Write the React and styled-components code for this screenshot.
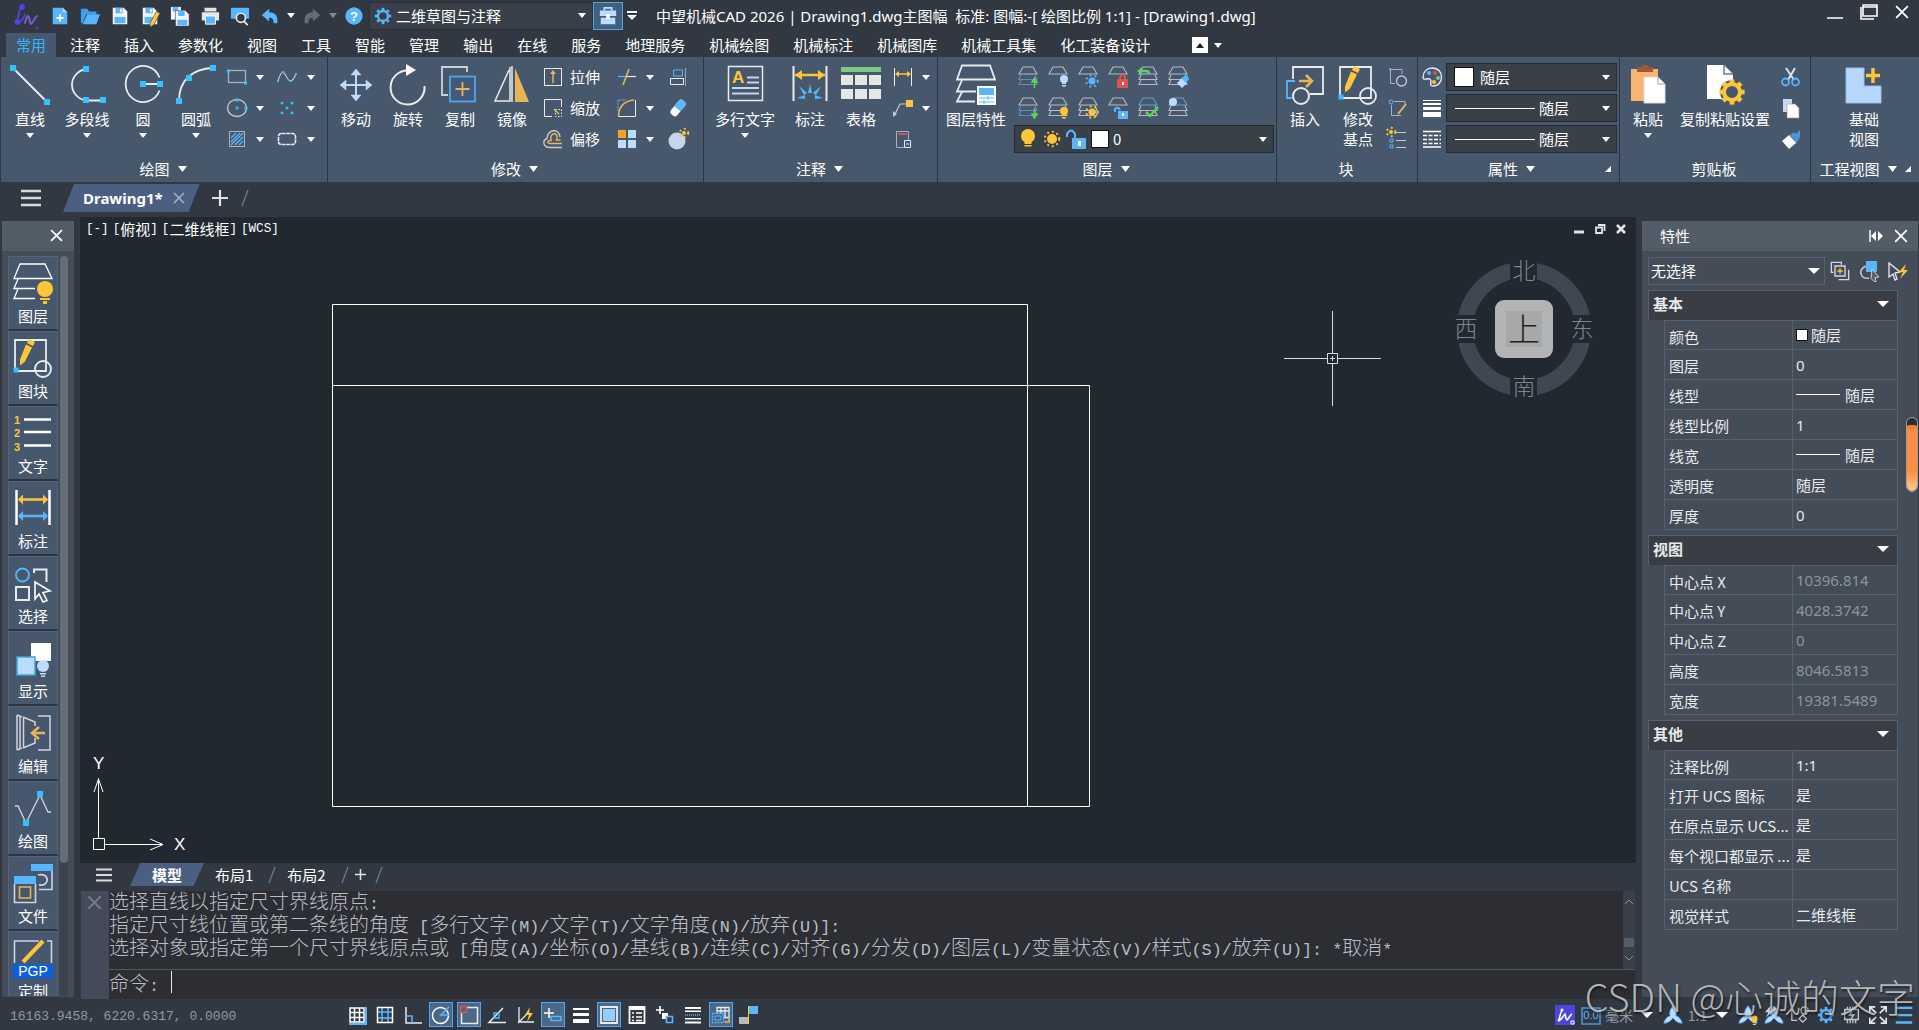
import { useState } from "react";
import styled, { createGlobalStyle } from "styled-components";

const W = "#e9ebee";
const B = "#58b6ff";
const C = "#35c0ff";
const Y = "#fdc53a";
const O = "#e9b553";
const L = "#bcdcff";

const Sq = ({ x, y, s = 6 }) => <rect x={x - s / 2} y={y - s / 2} width={s} height={s} fill={C} />;

const Stack = ({ color = "#b4bac3", low = color }) => (
    <g fill="none" stroke={color} strokeWidth="1.1">
        <path d="M6 1h10l4 7H2z" />
        <path d="M4 8.500l-2 5h18l-2-5M4 14l-2 4.500h18l-2-4.500" stroke={low} />
    </g>
);

const Trap = () => <path d="M6 1h10l4 7H2z" fill="none" stroke="#b4bac3" strokeWidth="1.1" />;

const Sun = ({ x, y, color = Y, r = 4 }) => (
    <g fill={color} stroke={color}>
        <circle cx={x} cy={y} r={r} stroke="none" />
        <circle cx={x} cy={y} r={r + 2.2} fill="none" strokeWidth="2" strokeDasharray="1.8 3" />
    </g>
);

const Bulb = ({ x, y, color = Y, r = 4 }) => (
    <g fill={color}>
        <circle cx={x} cy={y} r={r} />
        <path d={`M${x - r / 2} ${y + r - 1}h${r}v2h-${r}zM${x - r / 2} ${y + r + 2}h${r}v1.500h-${r}z`} />
    </g>
);

const Gear = ({ x, y, r, color, w = 2.5 }) => (
    <g fill="none" stroke={color}>
        <circle cx={x} cy={y} r={r} strokeWidth={w} />
        {[0, 45, 90, 135, 180, 225, 270, 315].map((a) => (
            <path key={a} d={`M${x} ${y - r - 1}v-${r * 0.45}`} strokeWidth={w * 1.2} transform={`rotate(${a} ${x} ${y})`} />
        ))}
    </g>
);

const EditBlock = () => (
    <>
        <path d="M2 34V3h31v31z" fill="none" stroke={W} strokeWidth="1.8" />
        <circle cx="30" cy="32" r="8" fill="none" stroke={W} strokeWidth="1.8" />
        <path d="M16 2l6 3-2 4-6-3zM13 7.500l6 3-7 14-5 4v-6z" fill={Y} />
        <Sq x={3} y={33} s={5} />
    </>
);

const Compass = () => <path d="M11 1c4 5 4 8 3 11 4 1 6 4 7 8-4 0-7-2-10-6-3 4-6 6-10 6 1-4 3-7 7-8-1-3-1-6 3-11z" fill={L} stroke={B} />;

const Floppy = () => (
    <>
        <path d="M3 2h12l4 4v14H3z" fill="#f3f4f6" />
        <path d="M6 2h8v6H6z" fill={B} />
        <path d="M11 3h2v4h-2z" fill="#f3f4f6" />
        <path d="M5 12h12v7H5z" fill={B} />
    </>
);

const art = {
    logo: <g fill="none" stroke="#5343e6" strokeWidth="1.800" strokeLinecap="round"><path d="M8 5C4 7 5 13 3 19" /><circle cx="8" cy="4" r="2" fill="#5343e6" /><circle cx="3.500" cy="19" r="2" fill="#5343e6" /><path d="M4 19c4 0 5-4 7-7" /><path d="M11 20c1-3 1-6 3-7 2 1 1 6 3 8 3-2 3-6 6-8" stroke="#7a58cf" strokeWidth="2" /><circle cx="23" cy="25" r=".5" /></g>,
    fileNew: <><path d="M3 2h11l5 5v13H3z" fill={B} /><path d="M14 2l5 5h-5z" fill="#a7d8ff" /><path d="M11 9v8M7 13h8" stroke="#fff" strokeWidth="2" /></>,
    open: <><path d="M1 3h7l2 3h8v3H7L3 19H1z" fill="#3c9ff0" /><path d="M8 9h14l-4 11H3z" fill={B} /></>,
    save: <Floppy />,
    saveAs: <><Floppy /><path d="M18 6l4 2-7 13-4 2 0-4z" fill={Y} stroke="#313842" strokeWidth=".6" /></>,
    saveAll: <><path d="M1 1h11v14H1z" fill="#f3f4f6" /><path d="M3 1h6v5H3z" fill={B} /><path d="M6 5h11l4 4v13H6z" fill="#f3f4f6" stroke="#313842" strokeWidth=".6" /><path d="M9 5h7v6H9zM8 15h11v6H8z" fill={B} /></>,
    print: <><path d="M5 2h13v4H5zM2 7h19v9H2z" fill="#e6e6e6" /><path d="M6 11h11v9H6z" fill={B} stroke="#fff" /></>,
    preview: <><path d="M1 2h20v12H1z" fill={B} /><circle cx="12" cy="13" r="5" fill="#313842" stroke={W} strokeWidth="1.800" /><path d="M15.500 17l4 4" stroke={W} strokeWidth="2" /></>,
    undo: <path d="M2 10l8-7v4c7 0 10 4 9 12h-4c0-4-1-6-5-6v4z" fill={B} />,
    redo: <path d="M20 10l-8-7v4C5 7 2 11 3 19h4c0-4 1-6 5-6v4z" fill="#686c73" />,
    help: <><circle cx="11" cy="11" r="9.500" fill={B} /><text x="11" y="16" textAnchor="middle" fontSize="15" fontWeight="bold" fill="#fff">?</text></>,
    gear: <Gear x={11} y={11} r={5.500} color={B} />,
    toolbox: <><path d="M7 5V2h8v3" fill="none" stroke={L} strokeWidth="2" /><path d="M2 5h18v6H2zM3 13h16v7H3z" fill={L} /><path d="M9 9h4v5H9z" fill="#fff" /></>,

    line: <><path d="M3 4l34 34" stroke={W} strokeWidth="2" /><Sq x={3} y={4} /><Sq x={37} y={38} /></>,
    pline: <><path d="M19 5A17 16 0 0 0 19 36.500H36" fill="none" stroke={W} strokeWidth="1.800" /><Sq x={19} y={5} /><Sq x={19} y={36} /><Sq x={36} y={36} /></>,
    circle: <><path d="M36.500 13.500a17.500 18 0 1 0 0 13M20 20h17" fill="none" stroke={W} strokeWidth="1.800" /><Sq x={20} y={20} /><Sq x={37} y={20} /></>,
    arc: <><path d="M3 37C3 16 16 5 37 4" fill="none" stroke={W} strokeWidth="1.800" /><Sq x={3} y={37} /><Sq x={13} y={14} /><Sq x={37} y={4} /></>,
    rect: <><rect x="2.500" y="4.500" width="17" height="12" fill="none" stroke="#aab2bd" strokeWidth="1.300" /><Sq x={2.5} y={5} s={3} /><Sq x={19.5} y={17} s={3} /></>,
    spline: <><path d="M2 15C4 8 6 5 8 7c3 3 4 9 7 8 2-1 4-4 5-8" fill="none" stroke="#c3c8cf" strokeWidth="1.100" /><Sq x={2} y={15} s={2} /><Sq x={7} y={6} s={2} /><Sq x={15} y={15} s={2} /><Sq x={20} y={8} s={2} /></>,
    ellipse: <><ellipse cx="11" cy="11" rx="9.500" ry="8.500" fill="none" stroke="#c3c8cf" strokeWidth="1.300" /><path d="M11 9v4M9 11h4" stroke={C} /><Sq x={11} y={3} s={3} /><Sq x={20} y={11} s={3} /></>,
    points: <><Sq x={6} y={6} s={2.500} /><Sq x={16} y={6} s={2.500} /><Sq x={11} y={11} s={2.500} /><Sq x={6} y={16} s={2.500} /><Sq x={16} y={16} s={2.500} /></>,
    hatch: <><rect x="3.500" y="3.500" width="15" height="15" fill="none" stroke="#aab2bd" /><path d="M5 10l5-5M5 14l9-9M5 17L17 5M9 17l8-8M13 17l4-4" stroke={B} strokeWidth="1.300" /></>,
    cloud: <rect x="2.500" y="5.500" width="17" height="11" rx="3" fill="none" stroke={W} strokeWidth="1.600" strokeDasharray="4 .6" />,

    move: <g fill={L} stroke={L}><path d="M20 9v24M8 21h24" strokeWidth="2" /><path d="M20 5l5 6H15zM20 37l5-6H15zM4 21l6-5v10zM36 21l-6-5v10z" strokeWidth=".5" /></g>,
    rotate: <><path d="M20 6.500A17 17 0 1 0 36.500 22" fill="none" stroke={W} strokeWidth="2" /><path d="M18 0l10 6-10 6z" fill="#fff" /></>,
    copy: <><path d="M27 8V3H2v28h6" fill="none" stroke="#cdd2d8" strokeWidth="1.800" /><rect x="10" y="12.500" width="25" height="25" fill="#43597a" stroke="#4ea6ea" strokeWidth="1.800" /><path d="M22.500 18v14M15.500 25h14" stroke={O} strokeWidth="1.800" /></>,
    mirror: <><path d="M18 3v34H3L17 6" fill="none" stroke={W} strokeWidth="1.500" /><path d="M20 2v36" stroke={W} strokeWidth="1.500" /><path d="M23 4l14 34H23z" fill={O} /></>,
    stretch: <><rect x="2.500" y="2.500" width="17" height="17" fill="none" stroke={W} /><path d="M11 17V7" stroke={O} strokeWidth="1.500" /><path d="M11 4l3 4H8z" fill={O} /></>,
    scale: <><path d="M10 19.500H2.500v-17h17V10" fill="none" stroke={W} /><path d="M13.500 12.500h6v7h-6z" fill="none" stroke={W} strokeDasharray="1.500 1.500" /><path d="M12 12l5 5" stroke={O} strokeWidth="1.500" /></>,
    offset: <><path d="M20 19.500H8c-7 0-8-7-3-9C6 1 17 0 18 9" fill="none" stroke="#c3c8cf" strokeWidth="1.400" /><path d="M20 15.500H8c-3 0-3-3 1-3C7 3 18 4 14.500 12h4" fill="none" stroke={O} strokeWidth="1.500" /></>,
    trim: <><path d="M2 10.500h8" stroke={B} strokeWidth="1.200" /><path d="M10 10.500h10" stroke={W} strokeWidth="1.200" /><path d="M7 19l6-16" stroke={O} strokeWidth="1.500" /></>,
    fillet: <><path d="M19.500 3v16.500H2.500v-3" fill="none" stroke={W} /><path d="M2 14V3h8" fill="none" stroke={B} strokeDasharray="2 1" /><path d="M2.500 19C3 9 8 4 18 3" fill="none" stroke={O} strokeWidth="1.600" /></>,
    array: <><path d="M2 2h8v8H2z" fill="#faa51b" /><path d="M12 2h8v8h-8zM2 12h8v8H2zM12 12h8v8h-8z" fill={L} /></>,
    align: <><path d="M6.500 4h9v6h-9z" fill="none" stroke={B} /><path d="M3.500 12.500h13v6h-13z" fill="none" stroke={W} /><path d="M18.500 2v18" stroke="#9aa5b4" /></>,
    eraser: <g transform="rotate(-50 11 11)"><rect x="2" y="7" width="18" height="8" rx="3" fill="#fff" /><path d="M10 7h7q3 0 3 4t-3 4h-7z" fill={B} /></g>,
    explode: <><circle cx="10" cy="13" r="8.500" fill="#c8d5e6" /><Sun x={17} y={5} r={2} /></>,

    mtext: <><rect x="3.500" y="2.500" width="34" height="34" fill="none" stroke={W} strokeWidth="1.500" /><text x="7" y="19" fontSize="17" fontWeight="bold" fill={Y}>A</text><path d="M22 13.500h12M22 18.500h12M7 24h27M7 29.500h27" stroke="#c6d6ee" strokeWidth="2" /></>,
    dim: <><path d="M3.500 2v35M36.500 2v35" stroke={W} strokeWidth="2" /><path d="M5 11h30" stroke={Y} strokeWidth="2.500" /><path d="M5 11l7-5v10zM35 11l-7-5v10z" fill={Y} /><path d="M20 20l2 9h-4zM9 22l8 7-3 2zM31 22l-8 7 3 2zM7 34l8-3v4zM33 34l-8-3v4z" fill={B} /></>,
    table: <><path d="M0 3h40v5H0z" fill="#7cc884" /><path d="M0 11h12v10H0zM14 11h12v10H14zM28 11h12v10H28zM0 25h12v10H0zM14 25h12v10H14zM28 25h12v10H28z" fill="#e6e6e6" /></>,
    dimSmall: <><path d="M2.500 2v18M19.500 2v18" stroke={W} /><path d="M4 8h14" stroke={Y} strokeWidth="1.500" /><path d="M3 8l4-3v6zM19 8l-4-3v6z" fill={Y} /></>,
    leader: <><path d="M2 19L8 7h7" fill="none" stroke="#c3c8cf" strokeWidth="1.200" /><path d="M1 20v-6l4 3z" fill="#c3c8cf" /><path d="M14 3h7v7h-7z" fill={Y} /></>,
    field: <><path d="M4.500 3.500h12v16h-12z" fill="none" stroke="#aab2bd" /><path d="M6 6h9" stroke="#d25353" strokeWidth="2" /><path d="M12.500 12.500h6v7h-6z" fill="#45576e" stroke={W} /><path d="M14 16h3" stroke={B} strokeWidth="2" /></>,

    layers: <><path d="M6 1.500h28l5 14H1zM6 16L1 27.500h19M6 28L1 37.500h18" fill="none" stroke={W} strokeWidth="1.800" /><path d="M21 22h19v19H21z" fill="#fff" /><path d="M23 24h15v7H23z" fill={B} /><path d="M23 34h15M23 38h15M32 32v4M28 36v4" stroke={B} /></>,
    lyUp: <><Stack low="#5d8fbd" /><path d="M17.500 22v-7M15 16l2.500-4 2.500 4z" stroke="#5ed35e" strokeWidth="1.500" fill="#5ed35e" /></>,
    lyOff: <><Trap /><Bulb x={17} y={13} color={L} /></>,
    lyFreeze: <><Trap /><Sun x={15} y={15} color={B} r={3.500} /></>,
    lyLock: <><Trap /><path d="M13 14v-3q3-4 5 0v3" fill="none" stroke="#e05050" strokeWidth="2" /><path d="M10 13h11v9H10z" fill="#e05050" /><path d="M15 16h2v3h-2z" fill="#fff" /></>,
    lyPrev: <><Stack /><path d="M2 5h7q3 0 3 3" fill="none" stroke="#5ed35e" strokeWidth="2.500" /><path d="M0 5l5-4v8z" fill="#5ed35e" /></>,
    lyMatch: <><Stack /><path d="M10 17l5-5 5 5-5 5z" fill={L} /><path d="M14 12l6-3 2 4-3 4z" fill={B} /></>,
    lyDown: <><Stack low="#5d8fbd" /><path d="M17.500 11v7M15 17l2.500 4 2.500-4z" stroke="#5ed35e" strokeWidth="1.500" fill="#5ed35e" /></>,
    lyOn: <><Stack /><Bulb x={17} y={14} /></>,
    lyThaw: <><Stack /><Sun x={15} y={15} r={3.500} /></>,
    lyUnlock: <><Trap /><path d="M8 15v-3q3-3 5 1" fill="none" stroke={B} strokeWidth="2" /><path d="M11 14h10v8H11z" fill={B} /><path d="M15 16h2v3h-2z" fill="#fff" /></>,
    lyCheck: <><Stack color="#5d9fd6" low="#b4bac3" /><path d="M9 15l4 4 8-9" fill="none" stroke="#5ed35e" strokeWidth="2.500" /></>,
    lyWalk: <><Stack color="#5d9fd6" low="#b4bac3" /><circle cx="6" cy="5" r="4" fill={L} /></>,
    bulb: <Bulb x={11} y={8} r={7} />,
    sun: <Sun x={11} y={11} r={5} />,
    unlock: <><path d="M2 9V6q4-7 8 0v5" fill="none" stroke={B} strokeWidth="2" /><path d="M7 10h14v11H7z" fill={B} /><path d="M13 13h3v5h-3z" fill="#fff" /></>,

    insert: <><path d="M8 15V3h30v27H25" fill="none" stroke={W} strokeWidth="1.800" /><path d="M10 17H2v17h5" fill="none" stroke={B} strokeWidth="1.800" /><circle cx="16" cy="32" r="8" fill="#45576e" stroke={W} strokeWidth="2" /><path d="M14 17h12M21 11l6 6-6 6" fill="none" stroke={O} strokeWidth="2.500" /></>,
    editBlock: <EditBlock />,
    blkMake: <><path d="M15 8V3.500H3.500v14H8" fill="none" stroke="#aab2bd" /><circle cx="14.500" cy="15" r="5" fill="none" stroke="#c3c8cf" strokeWidth="1.300" /><Sq x={3} y={3} s={2} /></>,
    blkEdit: <><path d="M7 4.500h11V9M14 18.500H4.500V8" fill="none" stroke="#aab2bd" /><circle cx="4" cy="5" r="2" fill="none" stroke={B} /><path d="M11 17l8-10" stroke={O} strokeWidth="2" /></>,
    attr: <><Sun x={4} y={4} r={2} /><path d="M3 11h3v3H3zM3 17h3v3H3z" fill="none" stroke={B} /><path d="M9 4.500h10M9 12.500h10M9 19.500h10" stroke="#c3c8cf" strokeWidth="1.200" /></>,

    palette: <><path d="M11 2c13 0 12 18 1 18-5 0 0-5-3-7-3-1-7 2-7-2C2 6 6 2 11 2z" fill="none" stroke={W} strokeWidth="1.400" /><circle cx="8" cy="7" r="2" fill={B} /><circle cx="14" cy="7" r="2" fill="#e05050" /><circle cx="17" cy="12" r="2" fill="#7cc884" /><circle cx="13" cy="16" r="2" fill={Y} /></>,
    weights: <path d="M2 3h18v1H2zM2 6h18v2H2zM2 10h18v3H2zM2 15h18v5H2z" fill="#fff" />,
    ltypes: <><path d="M2 3.500h18M2 19h18" stroke="#fff" strokeWidth="1.300" /><path d="M2 7.500h18M2 11.500h18M2 15.500h18" stroke="#fff" strokeDasharray="4 1.500" strokeWidth="1.500" /></>,

    paste: <><path d="M3 5h27v32H3z" fill="#f9b470" /><path d="M9 3h5V1h6v2h5v5H9z" fill="#9c5a37" /><path d="M16 13h14l7 7v19H16z" fill="#fff" stroke="#d7dce4" /><path d="M30 13v7h7" fill="none" stroke="#9aa5b4" /></>,
    pasteSet: <><path d="M2 1h17l9 9v15l-9 10H2z" fill="#fff" /><path d="M19 1v9h9" fill="none" stroke="#6d7c92" strokeWidth="1.500" /><circle cx="27" cy="28" r="12" fill="#47576c" /><Gear x={27} y={28} r={8} color={Y} w={4} /></>,
    cut: <><path d="M6 2l8 12M15 2L8 14" stroke="#d6e4f5" strokeWidth="2" /><circle cx="5.500" cy="16" r="3.500" fill="none" stroke={B} strokeWidth="1.800" /><circle cx="15.500" cy="16" r="3.500" fill="none" stroke={B} strokeWidth="1.800" /></>,
    pages: <><path d="M3 2h9v13H3z" fill="#cbd7ee" /><path d="M7 7h8l4 4v10H7z" fill="#fff" stroke="#8e9bb0" strokeWidth=".6" /></>,
    brush: <><path d="M10 7l4-3 2 2 4-4 0 7-4 7z" fill="#4e93dc" /><path d="M2 13l7-6 7 8-7 6z" fill="#fff" /></>,
    baseView: <><path d="M2 4h18v18h17v17H2z" fill="#b8d8fb" stroke="#96bfe9" /><path d="M29 4v15M22 11.500h14" stroke={Y} strokeWidth="3.500" /></>,

    pLayers: <><path d="M7 2h25l7 14.500H1zM5 17L1 26.500h21M5 27l-4 9.500h21" fill="none" stroke="#fff" strokeWidth="1.300" /><circle cx="32" cy="27" r="8" fill={Y} /><path d="M27 36h10v2H27zM30 39h4v3h-4z" fill={Y} /></>,
    pText: <><g fill={Y} fontSize="11" fontWeight="bold"><text x="1" y="12">1</text><text x="1" y="25">2</text><text x="1" y="39">3</text></g><path d="M11 7.500h27M11 20h27M11 33.500h27" stroke="#fff" strokeWidth="2.500" /></>,
    pDim: <><path d="M3.500 3v35M36.500 3v35" stroke="#fff" strokeWidth="2.500" /><path d="M6 12.500h28" stroke={Y} strokeWidth="2.500" /><path d="M5 12.500l5-5v10zM35 12.500l-5-5v10z" fill={Y} /><path d="M6 29h28" stroke={B} strokeWidth="2.500" /><path d="M5 29l5-5v10zM35 29l-5-5v10z" fill={B} /></>,
    pSelect: <><circle cx="9.500" cy="13" r="6.500" fill="none" stroke={B} strokeWidth="1.800" /><path d="M21 11V7.500h12.500V20M3 25h13v13H3z" fill="none" stroke={W} strokeWidth="2" /><path d="M22 20l15 9-7 1.500 4 8-4 1.500-4-8-4 5z" fill="none" stroke="#fff" strokeWidth="1.600" /></>,
    pShow: <><path d="M18 6h20v18H18z" fill="#fff" /><path d="M4 20h18v18H4z" fill={L} stroke="#3ca5dc" strokeWidth="1.500" /><circle cx="30" cy="29" r="6" fill={L} /><path d="M27 36h6v1.500h-6zM28 38.500h4v1.500h-4z" fill={L} /></>,
    pEdit: <><path d="M4 3v35M7 4v33M10.500 5v31M4 3l5 2M4 38l5-2M10 5l12 5v4M10 36l12-5v-5M25 4h12v34H25" fill="none" stroke="#cfd4da" strokeWidth="1.500" /><path d="M32 21H20M26 15l-7 6 7 6" fill="none" stroke={O} strokeWidth="2.500" /></>,
    pDraw: <><path d="M2 19h3l8 17L27 8l8 17h3" fill="none" stroke="#cfd4da" strokeWidth="1.300" /><Sq x={13} y={36} /><Sq x={27} y={7} /></>,
    pFile: <><path d="M18 2h22v7H18zM1 14h22v8H1z" fill={B} /><path d="M26 27.500h13V9M1.500 22v18.500h21V22" fill="none" stroke="#cfd4da" strokeWidth="1.600" /><path d="M6.500 25h11v11h-11z" fill="none" stroke={O} strokeWidth="1.600" /><path d="M25 13c12-3 12 12 1 10" fill="none" stroke="#c6d6ee" strokeWidth="1.800" /></>,
    pPgp: <><path d="M1.500 26V4H26M34 4h4.500v22" fill="none" stroke="#cfd4da" strokeWidth="1.600" /><path d="M10 25l20-21" stroke={Y} strokeWidth="4" /><path d="M0 27h40v14H0z" fill="#0b60df" /><text x="20" y="39" textAnchor="middle" fontSize="14" fill="#fff">PGP</text></>,

    pickAdd: <><path d="M4 12.500H1.500v-11h11V4M20.500 9.500v11h-11" fill="none" stroke="#d3d7dc" strokeWidth="1.500" /><path d="M5.500 5.500h11v11h-11z" fill="none" stroke="#d3d7dc" strokeWidth="1.500" /><path d="M11 8v6M8 11h6" stroke={Y} strokeWidth="1.500" /></>,
    quickPick: <><path d="M8 6c-9 4-5 14 3 12" fill="none" stroke="#c3c8cf" strokeWidth="1.600" /><path d="M8 1h11v11H8z" fill={B} /><path d="M14 9l7 8-4 .500 1 4-2 0-3-3z" fill="#5a6470" stroke={W} strokeWidth=".8" /></>,
    flashPick: <><path d="M2 3l11 9-5 1 2 6-2 1-2-6-4 3z" fill="none" stroke={W} strokeWidth="1.300" /><path d="M19 4l-7 8h4l-3 7 8-9h-4z" fill={Y} /></>,

    sGridBlue: <><path d="M3 3h14v14H3zM7.500 3v14M12.500 3v14M3 7.500h14M3 12.500h14" fill="none" stroke="#fff" strokeWidth="1.500" /><path d="M2 19h17V2" fill="none" stroke={B} strokeWidth="2" /></>,
    sGrid: <><path d="M2 7h16M2 13h16M7 2v16M13 2v16" stroke={B} strokeWidth="1.500" /><path d="M2.500 2.500h15v15h-15z" fill="none" stroke="#fff" strokeWidth="1.500" /></>,
    sOrtho: <><path d="M3 2v16h16" fill="none" stroke={W} strokeWidth="1.500" /><path d="M3 11h6v7" fill="none" stroke={B} strokeWidth="1.500" /></>,
    sPolar: <><circle cx="9.500" cy="10.500" r="8" fill="none" stroke="#fff" strokeWidth="1.500" /><path d="M18 2l-8 8h8" fill="none" stroke={B} strokeWidth="1.600" /></>,
    sSnap: <><path d="M8 2.500h10.500v16h-16V8" fill="none" stroke={W} strokeWidth="1.500" /><path d="M1.500 1.500h6v6h-6z" fill="none" stroke="#e05050" strokeWidth="1.500" /></>,
    sTrack: <><path d="M19 17.500H2L16 3" fill="none" stroke={W} strokeWidth="1.500" /><path d="M7 8h5v5H7z" fill="none" stroke={B} strokeWidth="1.300" /></>,
    sDucs: <><path d="M4 2v15h15M3 18L14 7" fill="none" stroke={W} strokeWidth="1.300" /><path d="M15 2l-5 8h4l-2 7 6-9h-4z" fill={Y} /></>,
    sDyn: <><path d="M6 3v10M1 8h10" stroke="#fff" strokeWidth="1.500" /><path d="M8 11.500h10v4H8z" fill="none" stroke={B} strokeWidth="1.500" /></>,
    sLwt: <path d="M2 3h16v2H2zM2 8h16v3H2zM2 14h16v4H2z" fill="#fff" />,
    sTrans: <><path d="M2 2h16v16H2z" fill="none" stroke={W} strokeWidth="1.800" /><path d="M4 4h12v12H4z" fill="#96cdfa" /></>,
    sQuick: <><path d="M2.500 2h15v16h-15z" fill="none" stroke="#fff" strokeWidth="1.800" /><path d="M2 2h16v3H2z" fill="#fff" /><path d="M5 8h2M5 12h2M5 15.500h2M9 8h6M9 12h6M9 15.500h6" stroke="#fff" strokeWidth="1.600" /></>,
    sCycle: <><path d="M5 1v8M1 5h8" stroke="#fff" strokeWidth="1.600" /><path d="M7 8h6v6H7z" fill="#fff" /><path d="M11.500 11.500h6v6h-6z" fill="#313842" stroke={B} strokeWidth="1.600" /></>,
    sRows: <><path d="M2 2h16v2H2zM2 5.500h16V7H2zM2 13h16v1.500H2zM2 16.500h16v2H2z" fill="#fff" /><path d="M2 10h16" stroke={B} strokeDasharray="1 1" strokeWidth="1.500" /></>,
    sView: <><path d="M6 2.500h12v10H6zM10 2v10M14 2v10M6 6h12" fill="none" stroke={W} strokeWidth="1.300" /><path d="M1.500 8.500h11v9h-11z" fill="#446184" stroke={B} strokeDasharray="2 1" strokeWidth="1.500" /><path d="M4 11h6v4H4z" fill="none" stroke={B} /><path d="M18 12v5h-4" fill="none" stroke={O} strokeWidth="1.600" /></>,
    sIso: <><path d="M10 1h9v8h-9z" fill={B} /><path d="M0 12h9v7H0z" fill="#b9b9b9" /><path d="M9.500 1v18" stroke={Y} /></>,
    brand: <><rect width="20" height="20" fill="#4e46dc" /><path d="M7 5c-2 4-2 6-3 10 3 0 4-4 6-6 1 2 0 5 2 6 2-2 3-5 5-6" fill="none" stroke="#fff" strokeWidth="1.600" /><circle cx="7" cy="5" r="1.500" fill="#fff" /><circle cx="4" cy="15" r="1.500" fill="#fff" /><path d="M16 16h3v3h-3z" fill="none" stroke="#fff" /></>,
    units: <><path d="M1 3h18v16H1z" fill="none" stroke="#4a97d8" strokeWidth="1.500" /><text x="10" y="14" textAnchor="middle" fontSize="11" fill={B}>0.0</text></>,
    compass: <Compass />,
    compassBulb: <><Compass /><Bulb x={18} y={15} r={3.500} /></>,
    compassFlash: <><Compass /><path d="M8 0L1 8h4l-3 6 8-8H6z" fill="#d6d6d6" /></>,
    shapes: <><path d="M2 5v12h6" fill="none" stroke="#c3c8cf" strokeWidth="1.300" /><circle cx="16" cy="6" r="4" fill="none" stroke="#c3c8cf" strokeWidth="1.300" /><path d="M14 11l4 4-4 4-4-4z" fill="none" stroke="#c3c8cf" strokeWidth="1.300" /></>,
    chip: <path d="M3 5h15v11H3zM6 2v3M9 2v3M12 2v3M15 2v3M6 16v4M9 16v4M12 16v4M15 16v4M11 7l-3 4h5l-3 4" fill="none" stroke="#c3c8cf" strokeWidth="1.500" />,
    expand: <path d="M2 8V2h6M14 2h6v6M20 14v6h-6M8 20H2v-6M2 2l7 7M20 2l-7 7M20 20l-7-7M2 20l7-7" fill="none" stroke="#e4e6ea" strokeWidth="1.800" />,
    bars: <path d="M2 2h18v2.500H2zM2 10h18v2.500H2zM2 18h18v2.500H2z" fill={B} />,
};

const Icon = ({ name, size = 22, box = size }) => (
    <Svg width={size} height={size} viewBox={`0 0 ${box} ${box}`} aria-hidden="true">{art[name]}</Svg>
);

const Caret = ({ wide }) => (
    <Svg width={wide ? 12 : 8} height={wide ? 6 : 5} viewBox="0 0 8 5" preserveAspectRatio="none" aria-hidden="true">
        <path d="M0 0h8L4 5z" fill="#fff" />
    </Svg>
);

const Cross = ({ size = 12, color = "#fff" }) => (
    <Svg width={size} height={size} viewBox="0 0 12 12" aria-hidden="true">
        <path d="M1 1l10 10M11 1L1 11" stroke={color} strokeWidth="1.600" />
    </Svg>
);

const Lines = ({ size = 20 }) => (
    <Svg width={size} height={size} viewBox="0 0 20 20" aria-hidden="true">
        <path d="M0 3h20M0 10h20M0 17h20" stroke="#d9d9d9" strokeWidth="2.500" />
    </Svg>
);

const Slash = () => (
    <SlashMark width="8" height="20" viewBox="0 0 8 20" aria-hidden="true">
        <path d="M1 18L7 2" stroke="#6f7884" strokeWidth="1.300" />
    </SlashMark>
);

const Plus = ({ size = 16 }) => (
    <Svg width={size} height={size} viewBox="0 0 16 16" aria-hidden="true">
        <path d="M8 0v16M0 8h16" stroke="#e1e1e1" strokeWidth="2.200" />
    </Svg>
);

// Latin runs in the console are half as wide as the Chinese ones
const Mono = ({ children }) =>
    children.split(/([\x20-\x7e]+)/).map((part, i) => (i % 2 ? <Half key={i}>{part}</Half> : part));

const BigTool = ({ icon, label, width, drop }) => (
    <Big $width={width}>
        <Icon name={icon} size={40} />
        <BigLabel>{label}</BigLabel>
        {drop && <Caret />}
    </Big>
);

const Small = ({ icon, label }) => (
    <Tool aria-label={label}><Icon name={icon} /></Tool>
);

const Drop = ({ label }) => <Tool aria-label={label}><Caret /></Tool>;

const Group = ({ title, width, more, launcher, children }) => (
    <Panel $width={width}>
        <PanelBody>{children}</PanelBody>
        <PanelTitle>
            <TitleButton $launcher={launcher}>{title}{more && <Caret wide />}</TitleButton>
            {launcher && <Svg width="6" height="6" viewBox="0 0 6 6"><path d="M6 0v6H0z" fill="#fff" /></Svg>}
        </PanelTitle>
    </Panel>
);

const tabs = ["常用", "注释", "插入", "参数化", "视图", "工具", "智能", "管理", "输出", "在线", "服务", "地理服务", "机械绘图", "机械标注", "机械图库", "机械工具集", "化工装备设计"];

const quick = [
    ["fileNew", "新建"], ["open", "打开"], ["save", "保存"], ["saveAs", "另存为"],
    ["saveAll", "全部保存"], ["print", "打印"], ["preview", "打印预览"],
];

const paletteItems = [
    ["pLayers", "图层"], ["editBlock", "图块"], ["pText", "文字"], ["pDim", "标注"], ["pSelect", "选择"],
    ["pShow", "显示"], ["pEdit", "编辑"], ["pDraw", "绘图"], ["pFile", "文件"], ["pPgp", "定制"],
];

const layerTools = [
    ["lyUp", "上移图层"], ["lyOff", "关闭图层"], ["lyFreeze", "冻结图层"], ["lyLock", "锁定图层"], ["lyPrev", "上一个图层"], ["lyMatch", "图层匹配"],
    ["lyDown", "下移图层"], ["lyOn", "打开图层"], ["lyThaw", "解冻图层"], ["lyUnlock", "解锁图层"], ["lyCheck", "置为当前"], ["lyWalk", "图层漫游"],
];

const properties = [
    ["基本", [["颜色", "随层", "swatch"], ["图层", "0"], ["线型", "随层", "line"], ["线型比例", "1"], ["线宽", "随层", "line"], ["透明度", "随层"], ["厚度", "0"]]],
    ["视图", [["中心点 X", "10396.814", "dim"], ["中心点 Y", "4028.3742", "dim"], ["中心点 Z", "0", "dim"], ["高度", "8046.5813", "dim"], ["宽度", "19381.5489", "dim"]]],
    ["其他", [["注释比例", "1:1"], ["打开 UCS 图标", "是"], ["在原点显示 UCS...", "是"], ["每个视口都显示 ...", "是"], ["UCS 名称", ""], ["视觉样式", "二维线框"]]],
];

const statusTools = [
    ["sGridBlue", "捕捉"], ["sGrid", "栅格"], ["sOrtho", "正交"], ["sPolar", "极轴", true], ["sSnap", "对象捕捉", true],
    ["sTrack", "对象追踪"], ["sDucs", "动态 UCS"], ["sDyn", "动态输入", true], ["sLwt", "线宽"], ["sTrans", "透明度", true],
    ["sQuick", "快捷特性"], ["sCycle", "选择循环"], ["sRows", "注释监视"], ["sView", "视口", true], ["sIso", "隔离对象"],
];

const log = [
    "选择直线以指定尺寸界线原点:",
    "指定尺寸线位置或第二条线的角度 [多行文字(M)/文字(T)/文字角度(N)/放弃(U)]:",
    "选择对象或指定第一个尺寸界线原点或 [角度(A)/坐标(O)/基线(B)/连续(C)/对齐(G)/分发(D)/图层(L)/变量状态(V)/样式(S)/放弃(U)]: *取消*",
];

const TitleBar = () => (
    <TopBar>
        <Logo><Icon name="logo" size={26} box={26} /></Logo>
        {quick.map(([icon, label]) => <QuickButton key={icon} aria-label={label}><Icon name={icon} size={20} box={22} /></QuickButton>)}
        <QuickButton aria-label="撤销"><Icon name="undo" size={20} box={22} /></QuickButton>
        <DropButton aria-label="撤销列表"><Caret /></DropButton>
        <QuickButton aria-label="重做"><Icon name="redo" size={20} box={22} /></QuickButton>
        <DropButton aria-label="重做列表" $faded><Caret /></DropButton>
        <QuickButton aria-label="帮助"><Icon name="help" size={20} box={22} /></QuickButton>
        <SpaceBox>
            <Icon name="gear" size={20} box={22} />
            <Select aria-label="工作空间"><option>二维草图与注释</option></Select>
            <Caret />
        </SpaceBox>
        <ToolboxButton aria-label="工具箱"><Icon name="toolbox" size={20} box={22} /></ToolboxButton>
        <DropButton aria-label="自定义"><Svg width="10" height="10" viewBox="0 0 10 10"><path d="M0 0h10v2H0zM0 4h10L5 9z" fill="#fff" /></Svg></DropButton>
        <WindowTitle>中望机械CAD 2026 | Drawing1.dwg主图幅&nbsp; 标准: 图幅:-[ 绘图比例 1:1] - [Drawing1.dwg]</WindowTitle>
        <WindowButtons>
            <Plain aria-label="最小化"><Svg width="16" height="16" viewBox="0 0 16 16"><path d="M0 14h16" stroke="#fff" strokeWidth="1.500" /></Svg></Plain>
            <Plain aria-label="还原"><Svg width="18" height="16" viewBox="0 0 18 16"><path d="M3 1h14v11H3zM3 3h14M1 3v12h13" fill="none" stroke="#fff" strokeWidth="1.600" /></Svg></Plain>
            <Plain aria-label="关闭"><Cross size={14} /></Plain>
        </WindowButtons>
    </TopBar>
);

const Ribbon = () => (
    <RibbonBar>
        <Group title="绘图" width={327} more>
            <BigTool icon="line" label="直线" width={58} drop />
            <BigTool icon="pline" label="多段线" width={56} drop />
            <BigTool icon="circle" label="圆" width={56} drop />
            <BigTool icon="arc" label="圆弧" width={50} drop />
            <Grid $cols="32px 14px 40px 8px">
                <Small icon="rect" label="矩形" /><Drop label="矩形列表" /><Small icon="spline" label="样条曲线" /><Drop label="样条曲线列表" />
                <Small icon="ellipse" label="椭圆" /><Drop label="椭圆列表" /><Small icon="points" label="点" /><Drop label="点列表" />
                <Small icon="hatch" label="填充" /><Drop label="填充列表" /><Small icon="cloud" label="修订云线" /><Drop label="云线列表" />
            </Grid>
        </Group>
        <Group title="修改" width={376} more>
            <Indent />
            <BigTool icon="move" label="移动" width={52} />
            <BigTool icon="rotate" label="旋转" width={52} />
            <BigTool icon="copy" label="复制" width={52} />
            <BigTool icon="mirror" label="镜像" width={52} />
            <Grid $cols="73px 32px 14px 42px">
                <TextTool><Icon name="stretch" />拉伸</TextTool><Small icon="trim" label="修剪" /><Drop label="修剪列表" /><Small icon="align" label="对齐" />
                <TextTool><Icon name="scale" />缩放</TextTool><Small icon="fillet" label="圆角" /><Drop label="圆角列表" /><Small icon="eraser" label="删除" />
                <TextTool><Icon name="offset" />偏移</TextTool><Small icon="array" label="阵列" /><Drop label="阵列列表" /><Small icon="explode" label="分解" />
            </Grid>
        </Group>
        <Group title="注释" width={234} more>
            <BigTool icon="mtext" label="多行文字" width={82} drop />
            <BigTool icon="dim" label="标注" width={48} />
            <BigTool icon="table" label="表格" width={54} />
            <Grid $cols="30px 16px">
                <Small icon="dimSmall" label="线性标注" /><Drop label="线性标注列表" />
                <Small icon="leader" label="引线" /><Drop label="引线列表" />
                <Small icon="field" label="字段" />
            </Grid>
        </Group>
        <Group title="图层" width={339} more>
            <BigTool icon="layers" label="图层特性" width={76} />
            <Grid $cols="repeat(6, 30px) 80px">
                {layerTools.map(([icon, label], i) => (
                    <LayerCell key={icon} $last={i % 6 === 5}><Small icon={icon} label={label} /></LayerCell>
                ))}
                <Combo $span $gap={2}>
                    <Icon name="bulb" size={22} /><Icon name="sun" size={22} /><Icon name="unlock" size={22} /><Swatch $size={18} />
                    <Select aria-label="当前图层"><option>0</option></Select>
                    <Caret />
                </Combo>
            </Grid>
        </Group>
        <Group title="块" width={141}>
            <BigTool icon="insert" label="插入" width={56} />
            <BigTool icon="editBlock" label={<>修改<br />基点</>} width={50} />
            <Grid $cols="30px">
                <Small icon="blkMake" label="创建块" />
                <Small icon="blkEdit" label="编辑块" />
                <Small icon="attr" label="属性" />
            </Grid>
        </Group>
        <Group title="属性" width={202} more launcher>
            <Grid $cols="28px 171px">
                <Small icon="palette" label="颜色" />
                <Combo $pad={5}><Swatch $size={20} /><Select aria-label="颜色"><option>随层</option></Select><Caret /></Combo>
                <Small icon="weights" label="线宽" />
                <Combo $pad={8}><Stroke $width={80} /><Select aria-label="线宽"><option>随层</option></Select><Caret /></Combo>
                <Small icon="ltypes" label="线型" />
                <Combo $pad={8}><Stroke $width={80} /><Select aria-label="线型"><option>随层</option></Select><Caret /></Combo>
            </Grid>
        </Group>
        <Group title="剪贴板" width={191}>
            <BigTool icon="paste" label="粘贴" width={56} drop />
            <BigTool icon="pasteSet" label="复制粘贴设置" width={98} />
            <Grid $cols="34px">
                <Small icon="cut" label="剪切" />
                <Small icon="pages" label="复制" />
                <Small icon="brush" label="格式刷" />
            </Grid>
        </Group>
        <Group title="工程视图" more launcher>
            <BigTool icon="baseView" label={<>基础<br />视图</>} width={106} />
        </Group>
    </RibbonBar>
);

const ToolPalette = () => (
    <Palette $width={72}>
        <PaletteHead><Plain aria-label="关闭工具面板"><Cross size={13} /></Plain></PaletteHead>
        <PaletteBody>
            <PaletteList>
                {paletteItems.map(([icon, label]) => (
                    <PaletteButton key={icon}><Icon name={icon} size={40} />{label}</PaletteButton>
                ))}
            </PaletteList>
            <Track><Thumb /></Track>
        </PaletteBody>
    </Palette>
);

const Drawing = () => (
    <Canvas>
        <Sheet aria-label="图形">
            <g fill="none" stroke="#fff">
                <path d="M252.500 87.500H947.500V589.500H252.500zM252.500 168.500H1009.500V589.500H947" />
                <path d="M1204 141.500H1247M1257 141.500H1301M1252.500 94V136M1252.500 146V189M1247.500 136.500h10v10h-10zM1250 141.500h5M1252.500 139v5" stroke="#d8dadd" />
            </g>
        </Sheet>
        <ViewLabels>
            <Plain><Mono>[-]</Mono></Plain>
            <Plain><Mono>[俯视]</Mono></Plain>
            <Plain><Mono>[二维线框]</Mono></Plain>
            <Plain><Mono>[WCS]</Mono></Plain>
            <ViewButtons>
                <Plain aria-label="最小化视口"><Svg width="10" height="10" viewBox="0 0 10 10"><path d="M0 8h10" stroke="#e5e5e5" strokeWidth="3" /></Svg></Plain>
                <Plain aria-label="还原视口"><Svg width="10" height="10" viewBox="0 0 10 10"><path d="M1 3.500h6v5.500H1zM3 1h6.500v6" fill="none" stroke="#e5e5e5" strokeWidth="1.800" /></Svg></Plain>
                <Plain aria-label="关闭视口"><Svg width="10" height="10" viewBox="0 0 10 10"><path d="M1 1l8 8M9 1L1 9" stroke="#e5e5e5" strokeWidth="2.500" /></Svg></Plain>
            </ViewButtons>
        </ViewLabels>
        <ViewCube viewBox="0 0 140 140" aria-label="视图方位">
            <circle cx="70" cy="70" r="59" fill="none" stroke="#3f4751" strokeWidth="16" />
            <path d="M56 0h27v22H56zM56 118h27v22H56zM0 56h22v28H0zM118 56h22v28h-22z" fill="#212830" />
            <g fill="#80858b" fontSize="23" textAnchor="middle">
                <text x="70" y="20">北</text><text x="70" y="136">南</text><text x="12" y="78">西</text><text x="128" y="78">东</text>
            </g>
            <rect x="41" y="41" width="58" height="58" rx="9" fill="#b3b4b6" />
            <path d="M52 52h36v36H52z" fill="#a7a8aa" />
            <text x="70" y="82" fontSize="32" fill="#222" textAnchor="middle">上</text>
        </ViewCube>
        <Ucs viewBox="0 0 100 104" aria-label="坐标系">
            <path d="M6.500 87.500h11v11h-11zM11.500 87V27M7 41l4.500-13L16 41M18 93.500h58M63 88l13 5.500L63 99" fill="none" stroke="#fff" />
            <text x="6" y="18" fontSize="17" fill="#fff">Y</text>
            <text x="87" y="99" fontSize="17" fill="#fff">X</text>
        </Ucs>
    </Canvas>
);

const LayoutTabs = () => (
    <LayoutBar>
        <Plain aria-label="布局列表"><Lines size={16} /></Plain>
        <ActiveLayout>模型</ActiveLayout>
        <LayoutTab>布局1</LayoutTab>
        <Slash />
        <LayoutTab>布局2</LayoutTab>
        <Slash />
        <LayoutAdd aria-label="新建布局"><Plus size={11} /></LayoutAdd>
        <Slash />
    </LayoutBar>
);

const Console = () => {
    const [command, setCommand] = useState("");

    return (
        <ConsoleBox>
            <ConsoleGrip><Plain aria-label="关闭命令行"><Cross size={15} color="#757b86" /></Plain></ConsoleGrip>
            <ConsoleMain>
                <History>
                    <Log>{log.map((row) => <LogRow key={row}><Mono>{row}</Mono></LogRow>)}</Log>
                    <ConsoleTrack>
                        <Svg width="10" height="6" viewBox="0 0 10 6"><path d="M1 5l4-4 4 4" fill="none" stroke="#8b919b" /></Svg>
                        <ConsoleThumb />
                        <Svg width="10" height="6" viewBox="0 0 10 6"><path d="M1 1l4 4 4-4" fill="none" stroke="#8b919b" /></Svg>
                    </ConsoleTrack>
                </History>
                <CommandRow>
                    <label htmlFor="command">命令<Half>:</Half></label>
                    <Cursor />
                    <CommandInput id="command" value={command} onChange={(event) => setCommand(event.target.value)} />
                </CommandRow>
            </ConsoleMain>
        </ConsoleBox>
    );
};

const Properties = () => (
    <Palette>
        <PaletteHead $wide>
            <HeadTitle>特性</HeadTitle>
            <Plain aria-label="自动隐藏"><Svg width="14" height="12" viewBox="0 0 14 12"><path d="M1 0v12" stroke="#fff" strokeWidth="1.500" /><path d="M7 1v10L2 6zM9 1v10l5-5z" fill="#fff" /></Svg></Plain>
            <Plain aria-label="关闭特性"><Cross size={14} /></Plain>
        </PaletteHead>
        <PropBody>
            <PickRow>
                <PickBox>
                    <Select aria-label="选择对象"><option>无选择</option></Select>
                    <Caret wide />
                </PickBox>
                <PickButton aria-label="添加选择"><Icon name="pickAdd" size={20} box={22} /></PickButton>
                <PickButton aria-label="选择对象"><Icon name="quickPick" size={22} /></PickButton>
                <PickButton aria-label="快速选择"><Icon name="flashPick" size={22} /></PickButton>
            </PickRow>
            {properties.map(([title, rows]) => (
                <Section key={title}>
                    <SectionHead>{title}<Caret wide /></SectionHead>
                    <PropTable aria-label={title}>
                        <tbody>
                            {rows.map(([name, value, kind]) => (
                                <tr key={name}>
                                    <PropName>{name}</PropName>
                                    <PropValue $dim={kind === "dim"}>
                                        <ValueRow>
                                            {kind === "swatch" && <Swatch $size={12} />}
                                            {kind === "line" && <Stroke $width={44} $thin />}
                                            {value}
                                        </ValueRow>
                                    </PropValue>
                                </tr>
                            ))}
                        </tbody>
                    </PropTable>
                </Section>
            ))}
        </PropBody>
        <Gauge><GaugeFill /></Gauge>
    </Palette>
);

const StatusBar = () => (
    <Status>
        <Coords>16163.9458, 6220.6317, 0.0000</Coords>
        <StatusGroup>
            {statusTools.map(([icon, label, on]) => (
                <StatusButton key={icon} $on={on} aria-label={label} aria-pressed={!!on}><Icon name={icon} size={20} /></StatusButton>
            ))}
        </StatusGroup>
        <StatusEnd>
            <EndButton aria-label="中望"><Icon name="brand" size={20} /></EndButton>
            <EndButton aria-label="单位格式"><Icon name="units" size={20} /></EndButton>
            <UnitButton $width={30}>毫米</UnitButton>
            <EndButton aria-label="单位列表"><Caret wide /></EndButton>
            <EndButton aria-label="注释比例"><Icon name="compass" size={20} box={22} /></EndButton>
            <UnitButton $width={23}>1:1</UnitButton>
            <EndButton aria-label="比例列表"><Caret wide /></EndButton>
            <EndButton aria-label="注释可见性"><Icon name="compassBulb" size={20} box={22} /></EndButton>
            <EndButton aria-label="自动缩放"><Icon name="compassFlash" size={20} box={22} /></EndButton>
            <EndButton aria-label="图形工具"><Icon name="shapes" size={20} box={22} /></EndButton>
            <EndButton aria-label="设置"><Icon name="gear" size={20} box={22} /></EndButton>
            <EndButton aria-label="硬件加速"><Icon name="chip" size={20} box={22} /></EndButton>
            <EndButton aria-label="全屏"><Icon name="expand" size={20} box={22} /></EndButton>
            <EndButton aria-label="菜单"><Icon name="bars" size={20} box={22} /></EndButton>
        </StatusEnd>
        <Watermark>CSDN @心诚的文字</Watermark>
    </Status>
);

export default function App() {
    const [tab, setTab] = useState("常用");

    return (
        <Page>
            <GlobalStyle />
            <TitleBar />
            <TabBar>
                {tabs.map((name) => <Tab key={name} $active={name === tab} onClick={() => setTab(name)}>{name}</Tab>)}
                <Collapse aria-label="折叠功能区"><Svg width="8" height="5" viewBox="0 0 8 5"><path d="M0 5h8L4 0z" fill="#222" /></Svg></Collapse>
                <DropButton aria-label="功能区选项"><Caret /></DropButton>
            </TabBar>
            <Ribbon />
            <DocBar>
                <Plain aria-label="文档列表"><Lines /></Plain>
                <DocTab>
                    <Plain>Drawing1*</Plain>
                    <Plain aria-label="关闭文档"><Cross color="#a9b0bd" /></Plain>
                </DocTab>
                <DocAdd aria-label="新建文档"><Plus /></DocAdd>
                <Slash />
            </DocBar>
            <Workspace>
                <ToolPalette />
                <Center>
                    <Drawing />
                    <LayoutTabs />
                    <Console />
                </Center>
                <Properties />
            </Workspace>
            <StatusBar />
        </Page>
    );
}

const GlobalStyle = createGlobalStyle`
    * {
        box-sizing: border-box;
    }
    body {
        margin: 0;
        background-color: #313842;
        color: #fff;
        font: 15px/20px "Noto Sans CJK SC", sans-serif;
    }
    button, select, input {
        font: inherit;
        color: inherit;
        border: 0;
        padding: 0;
        margin: 0;
        background: none;
    }
`

const Page = styled('div')`
    min-height: 100vh;
    display: flex;
    flex-direction: column;
`

const Svg = styled('svg')`
    display: block;
    flex: none;
    overflow: visible;
    font-family: "Liberation Sans", sans-serif;
`

const SlashMark = styled(Svg)`
    margin-left: 4px;
`

const Plain = styled('button')`
    display: flex;
    align-items: center;
    white-space: nowrap;
`

const TopBar = styled('header')`
    display: flex;
    align-items: center;
    height: 33px;
    padding-bottom: 2px;
`

const Logo = styled('div')`
    width: 45px;
    padding-left: 14px;
`

const QuickButton = styled(Plain)`
    width: 30px;
    height: 28px;
    justify-content: center;
`

const DropButton = styled(Plain)`
    width: 12px;
    height: 24px;
    justify-content: center;
    opacity: ${({ $faded }) => ($faded ? .4 : 1)};
`

const SpaceBox = styled('div')`
    display: flex;
    align-items: center;
    gap: 3px;
    width: 224px;
    height: 28px;
    padding: 0 6px 0 3px;
    background-color: #394049;
    border: 1px solid #2a3038;
`

const Select = styled('select')`
    appearance: none;
    flex: 1;
    min-width: 0;
    outline: none;
    option {
        color: #000;
    }
`

const ToolboxButton = styled(QuickButton)`
    background-color: #3f6080;
    border: 1px solid #4fa5dc;
    margin-right: 3px;
`

const WindowTitle = styled('div')`
    flex: 1;
    padding-left: 18px;
    white-space: nowrap;
    font-family: "Noto Sans", "Noto Sans CJK SC", sans-serif;
`

const WindowButtons = styled('div')`
    display: flex;
    gap: 17px;
    padding: 0 10px 8px 0;
`

const TabBar = styled('nav')`
    display: flex;
    align-items: center;
    gap: 4px;
    height: 24px;
    padding-left: 6px;
`

const Tab = styled('button')`
    height: 24px;
    padding: 0 10px;
    white-space: nowrap;
    color: ${({ $active }) => ($active ? "#35b7f5" : "#fff")};
    background-color: ${({ $active }) => ($active ? "#47586e" : "transparent")};
`

const Collapse = styled(Plain)`
    width: 16px;
    height: 16px;
    margin-left: 28px;
    justify-content: center;
    background-color: #fff;
`

const RibbonBar = styled('div')`
    display: flex;
    height: 125px;
    margin-left: 1px;
    background-color: #47576c;
`

const Panel = styled('section')`
    display: flex;
    flex-direction: column;
    flex: ${({ $width }) => ($width ? `0 0 ${$width}px` : 1)};
    min-width: 0;
    padding-top: 6px;
    border-right: 1px solid #2d343d;
    &:last-child{
        border-right: 0;
    }
`

const PanelBody = styled('div')`
    display: flex;
    flex: 1;
`

const PanelTitle = styled('div')`
    display: flex;
    align-items: center;
    height: 24px;
    padding: 0 8px 2px 0;
`

const TitleButton = styled(Plain)`
    flex: 1;
    justify-content: center;
    gap: 8px;
    padding-left: ${({ $launcher }) => ($launcher ? 0 : 6)}px;
    svg {
        width: 9px;
    }
`

const Big = styled('button')`
    display: flex;
    flex-direction: column;
    align-items: center;
    width: ${({ $width }) => $width}px;
    padding-top: 1px;
`

const BigLabel = styled('span')`
    margin: 5px 0 4px;
    white-space: nowrap;
`

const Indent = styled('div')`
    width: 2px;
`

const Grid = styled('div')`
    display: grid;
    grid-template-columns: ${({ $cols }) => $cols};
    grid-template-rows: repeat(3, 28px);
    row-gap: 3px;
`

const Tool = styled(Plain)`
    justify-content: center;
    width: 100%;
    height: 28px;
`

const TextTool = styled(Plain)`
    gap: 6px;
    padding-left: 4px;
`

const LayerCell = styled('div')`
    grid-column: ${({ $last }) => ($last ? "6 / 8" : "auto")};
    width: 28px;
`

const Combo = styled('div')`
    display: flex;
    align-items: center;
    gap: ${({ $gap = 4 }) => $gap}px;
    grid-column: ${({ $span }) => ($span ? "1 / -1" : "auto")};
    padding: 0 6px 0 ${({ $pad = 2 }) => $pad}px;
    background-color: #394048;
    border: 1px solid #252b32;
`

const Swatch = styled('span')`
    flex: none;
    width: ${({ $size }) => $size}px;
    height: ${({ $size }) => $size}px;
    background-color: #fff;
    border: 1px solid #111;
    margin: 0 2px;
`

const Stroke = styled('span')`
    flex: none;
    width: ${({ $width }) => $width}px;
    height: 1px;
    background-color: #fff;
    margin-right: ${({ $thin }) => ($thin ? 2 : 0)}px;
`

const DocBar = styled('div')`
    display: flex;
    align-items: center;
    height: 35px;
    padding: 0 0 3px 21px;
`

const DocTab = styled('div')`
    display: flex;
    align-items: center;
    gap: 10px;
    height: 28px;
    margin: 0 12px 0 22px;
    padding: 0 15px 0 20px;
    background-color: #4b5f80;
    clip-path: polygon(8% 0, 100% 0, 92% 100%, 0 100%);
    font-family: "Noto Sans", sans-serif;
    font-weight: bold;
`

const DocAdd = styled(Plain)`
    margin-right: 9px;
`

const Workspace = styled('main')`
    display: flex;
    flex: 1;
    gap: 6px;
    padding: 0 1px 0 2px;
`

const Center = styled('div')`
    display: flex;
    flex-direction: column;
    flex: 1;
    min-width: 0;
`

const Palette = styled('aside')`
    position: relative;
    display: flex;
    flex-direction: column;
    flex: 0 0 ${({ $width = 276 }) => $width}px;
    margin: 4px 0 2px;
    background-color: #434c57;
`

const PaletteHead = styled('div')`
    display: flex;
    align-items: center;
    justify-content: flex-end;
    gap: 11px;
    height: 30px;
    padding: 0 ${({ $wide }) => ($wide ? 10 : 11)}px ${({ $wide }) => ($wide ? 0 : 2)}px 18px;
    background-color: #525d68;
`

const HeadTitle = styled('h2')`
    flex: 1;
    margin: 0;
    font-size: 15px;
    font-weight: normal;
`

const PaletteBody = styled('div')`
    display: flex;
    flex: 1 1 0;
    min-height: 0;
    gap: 2px;
    padding: 5px 0 1px 6px;
`

const PaletteList = styled('div')`
    width: 50px;
    overflow: hidden;
`

const PaletteButton = styled('button')`
    display: flex;
    flex-direction: column;
    align-items: center;
    gap: 4px;
    width: 50px;
    height: 75px;
    padding-top: 5px;
    background-color: #47586e;
    border: 1px solid #54647a;
    border-bottom: 2px solid #2d343d;
`

const Track = styled('div')`
    width: 8px;
    border-radius: 4px;
    background-color: #3a434d;
`

const Thumb = styled('div')`
    height: 82%;
    border-radius: 4px;
    background-color: #646e78;
`

const Canvas = styled('div')`
    position: relative;
    flex: 1;
    overflow: hidden;
    background-color: #212830;
`

const Sheet = styled('svg')`
    position: absolute;
    inset: 0;
    width: 100%;
    height: 100%;
`

const ViewLabels = styled('div')`
    position: relative;
    display: flex;
    gap: 4px;
    padding: 2px 10px 0 6px;
`

const ViewButtons = styled('div')`
    display: flex;
    gap: 11px;
    margin-left: auto;
`

const ViewCube = styled('svg')`
    position: absolute;
    top: 42px;
    right: 42px;
    width: 140px;
    height: 140px;
    font-family: "Noto Sans CJK SC", serif;
    font-weight: 300;
`

const Ucs = styled('svg')`
    position: absolute;
    left: 7px;
    bottom: 8px;
    width: 100px;
    height: 104px;
    overflow: visible;
    font-family: "Liberation Sans", sans-serif;
`

const LayoutBar = styled('div')`
    display: flex;
    align-items: center;
    height: 28px;
    padding: 0 0 5px 16px;
`

const LayoutTab = styled('button')`
    padding: 0 11px;
`

const ActiveLayout = styled(LayoutTab)`
    height: 23px;
    margin-left: 18px;
    padding: 0 22px;
    font-weight: bold;
    background-color: #4b5f80;
    clip-path: polygon(14% 0, 100% 0, 86% 100%, 0 100%);
`

const LayoutAdd = styled(Plain)`
    margin: 0 5px 0 6px;
`

const ConsoleBox = styled('div')`
    display: flex;
    height: 108px;
    margin: 0 1px;
    color: #b9bec6;
    font-size: 20px;
    font-weight: 300;
`

const ConsoleGrip = styled('div')`
    width: 28px;
    padding: 4px 0 0 6px;
    background-color: #434a5a;
`

const ConsoleMain = styled('div')`
    display: flex;
    flex-direction: column;
    flex: 1;
    min-width: 0;
    background-color: #2c2e33;
`

const History = styled('div')`
    display: flex;
    height: 79px;
    border-bottom: 1px solid #55595e;
`

const Log = styled('div')`
    flex: 1;
    overflow: hidden;
`

const LogRow = styled('div')`
    height: 23px;
    line-height: 20px;
    white-space: pre;
`

const Half = styled('span')`
    font-family: "Liberation Mono", monospace;
    font-size: .84em;
`

const ConsoleTrack = styled('div')`
    display: flex;
    flex-direction: column;
    align-items: center;
    width: 12px;
    padding: 8px 0;
    background-color: #3a3f48;
`

const ConsoleThumb = styled('div')`
    width: 10px;
    height: 9px;
    margin: auto 0 8px;
    background-color: #525d68;
`

const CommandRow = styled('div')`
    display: flex;
    align-items: center;
    flex: 1;
`

const Cursor = styled('span')`
    width: 1px;
    height: 22px;
    margin: 0 2px 6px 12px;
    background-color: #e4e6ea;
`

const CommandInput = styled('input')`
    flex: 1;
    outline: none;
`

const PropBody = styled('div')`
    display: flex;
    flex-direction: column;
    gap: 5px;
    padding: 6px 20px 0 6px;
`

const PickRow = styled('div')`
    display: flex;
    margin-right: -20px;
`

const PickBox = styled('div')`
    display: flex;
    align-items: center;
    width: 177px;
    height: 28px;
    padding: 0 4px 0 2px;
    border: 1px solid #55616c;
`

const PickButton = styled(Plain)`
    width: 29px;
    justify-content: center;
`

const Section = styled('section')`
    color: #e8eaec;
`

const SectionHead = styled('button')`
    display: flex;
    align-items: center;
    justify-content: space-between;
    width: 100%;
    height: 30px;
    padding: 0 8px 3px 4px;
    font-weight: bold;
    background-color: #3a3e44;
    border: 1px solid #55616c;
    border-bottom: 0;
`

const PropTable = styled('table')`
    width: calc(100% - 16px);
    margin-left: 16px;
    table-layout: fixed;
    border-collapse: separate;
    border-spacing: 0;
    border-left: 1px solid #55616c;
    tr:first-child > * {
        border-top: 1px solid #55616c;
    }
`

const PropName = styled('th').attrs({ scope: "row" })`
    width: 128px;
    height: 30px;
    padding: 3px 0 0 4px;
    font-weight: normal;
    text-align: left;
    white-space: nowrap;
    border: 0 solid #55616c;
    border-width: 0 1px 1px 0;
`

const PropValue = styled('td')`
    height: 30px;
    padding: 0 3px;
    color: ${({ $dim }) => ($dim ? "#8d949c" : "inherit")};
    font-family: "Noto Sans", "Noto Sans CJK SC", sans-serif;
    border: 0 solid #55616c;
    border-width: 0 1px 1px 0;
`

const ValueRow = styled('span')`
    display: flex;
    align-items: center;
    gap: 3px;
    ${Swatch} {
        margin: 0;
    }
`

const Gauge = styled('div')`
    position: absolute;
    top: 196px;
    right: 0;
    width: 12px;
    height: 75px;
    padding-top: 7px;
    border: 1px solid #9a9fa6;
    border-radius: 6px;
    background-color: #2c2e33;
`

const GaugeFill = styled('div')`
    height: 100%;
    border-radius: 2px 2px 5px 5px;
    background: linear-gradient(#f5771f, #ff8f40 10%, #ff8f40 70%, #ffc98a);
`

const Status = styled('footer')`
    position: relative;
    display: flex;
    align-items: center;
    height: 31px;
    padding: 0 2px 0 10px;
`

const Coords = styled('div')`
    width: 335px;
    padding-top: 4px;
    color: #9299a6;
    font-family: "Liberation Mono", monospace;
    font-size: 13px;
    white-space: nowrap;
`

const StatusGroup = styled('div')`
    display: flex;
    gap: 4px;
`

const StatusButton = styled(Plain)`
    width: 24px;
    height: 25px;
    justify-content: center;
    border: 1px solid ${({ $on }) => ($on ? "#4fa5ee" : "transparent")};
    background-color: ${({ $on }) => ($on ? "#4b6886" : "transparent")};
`

const StatusEnd = styled('div')`
    display: flex;
    align-items: center;
    margin-left: auto;
`

const EndButton = styled(Plain)`
    width: 26px;
    justify-content: center;
`

const UnitButton = styled(Plain)`
    width: ${({ $width }) => $width}px;
    justify-content: center;
    color: #9299a6;
    font-size: 14px;
`

const Watermark = styled('div')`
    position: absolute;
    right: 4px;
    bottom: 12px;
    font-size: 38px;
    line-height: 44px;
    font-weight: 300;
    color: rgba(205, 205, 205, .85);
    text-shadow: 1px 2px 2px rgba(0, 0, 0, .5);
    pointer-events: none;
    white-space: nowrap;
`
